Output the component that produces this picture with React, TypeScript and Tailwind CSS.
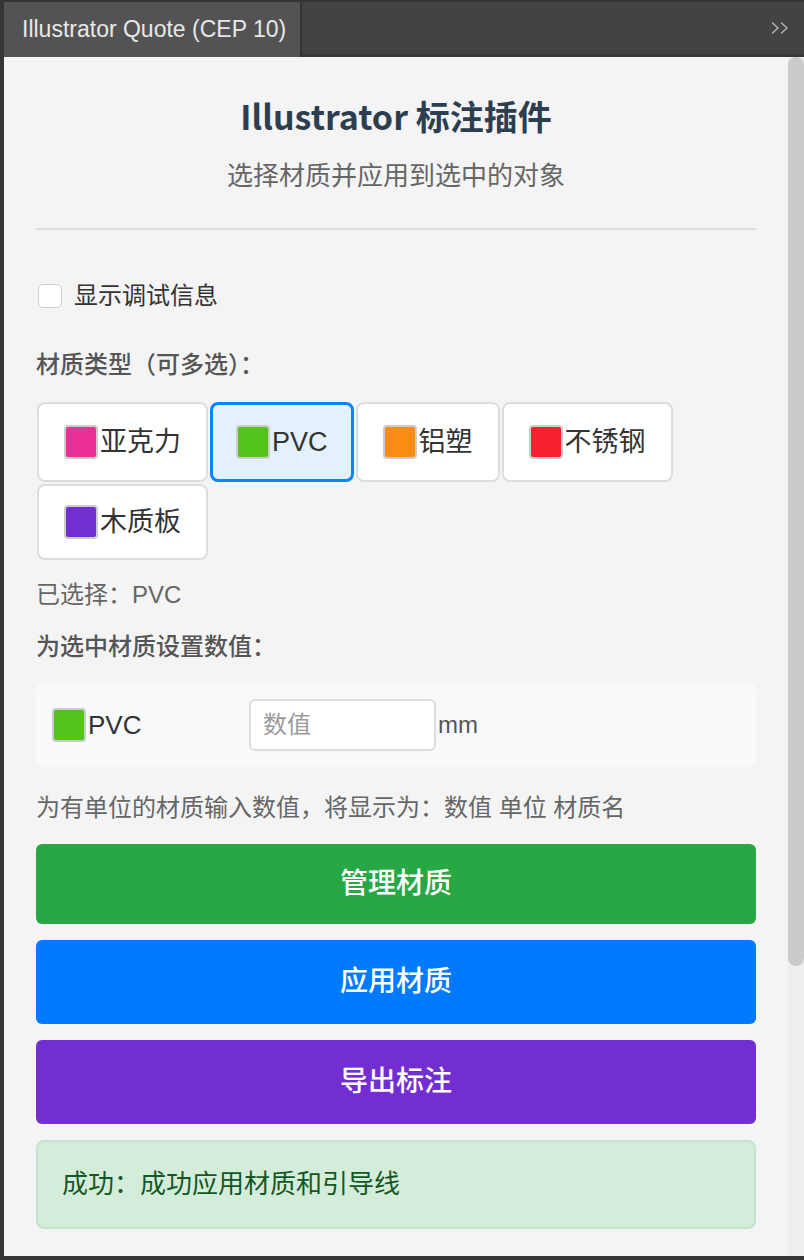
const materials = [
  { name: '亚克力', color: '#eb2f96', selected: false },
  { name: 'PVC', color: '#52c41a', selected: true },
  { name: '铝塑', color: '#fa8c16', selected: false },
  { name: '不锈钢', color: '#f5222d', selected: false },
  { name: '木质板', color: '#722ed1', selected: false },
];

function Swatch({ color }: { color: string }) {
  return (
    <span
      className="block w-[34px] h-[34px] rounded-[4px] border-2 border-[#cccccc] shrink-0"
      style={{ backgroundColor: color }}
    />
  );
}

export default function App() {
  return (
    <div className="w-[804px] h-[1260px] bg-[#353535] flex flex-col overflow-hidden font-['Liberation_Sans','Noto_Sans_CJK_SC',sans-serif]">
      {/* panel tab bar */}
      <div className="h-[57px] flex pt-[2px] shrink-0">
        <div className="ml-[4px] w-[296px] bg-[#535353] flex items-center pl-[18px] text-[23px] text-[#e8e8e8]">
          Illustrator Quote (CEP 10)
        </div>
        <div className="w-[2px] bg-[#353535]" />
        <div className="flex-1 bg-[#434343] border-b-[3px] border-[#383838] flex items-center justify-end pr-[14px]">
          <svg width="20" height="14" viewBox="0 0 20 14" fill="none" stroke="#b8b8b8" strokeWidth="1.3">
            <path d="M2 1.5 L8 7 L2 12.5" />
            <path d="M11 1.5 L17 7 L11 12.5" />
          </svg>
        </div>
      </div>

      {/* panel body */}
      <div className="flex-1 flex ml-[4px] mb-[4px] min-h-0">
        <div className="flex-1 bg-[#f4f4f4] px-[32px] flex flex-col">
          <h1 className="mt-[37px] text-center text-[34px] leading-[44px] font-bold text-[#2c3e50] font-['Noto_Sans_CJK_SC',sans-serif]">
            Illustrator 标注插件
          </h1>
          <p className="mt-[22px] text-center text-[26px] leading-[32px] text-[#666666]">
            选择材质并应用到选中的对象
          </p>
          <div className="mt-[36px] h-[2px] bg-[#dfdfdf]" />

          <label className="mt-[54px] flex items-center h-[24px] gap-[12px] pl-[2px]">
            <span className="block w-[24px] h-[24px] rounded-[5px] border border-[#cfcfcf] bg-white" />
            <span className="text-[24px] leading-[32px] text-[#333333]">显示调试信息</span>
          </label>

          <div className="mt-[41px] text-[24px] leading-[32px] font-medium text-[#555555]">
            材质类型（可多选）：
          </div>

          <div className="mt-[21px] flex flex-wrap gap-[2px] pl-[1px]">
            {materials.map((m) =>
              m.selected ? (
                <div
                  key={m.name}
                  className="flex items-center gap-[2px] rounded-[8px] border-[3px] border-[#0a84ff] bg-[#e4f0fc] px-[23px] py-[19px]"
                >
                  <Swatch color={m.color} />
                  <span className="text-[27px] leading-[36px] text-[#333333]">{m.name}</span>
                </div>
              ) : (
                <div
                  key={m.name}
                  className="flex items-center gap-[2px] rounded-[8px] border-2 border-[#dddddd] bg-white px-[25px] py-[18px]"
                >
                  <Swatch color={m.color} />
                  <span className="text-[27px] leading-[36px] text-[#333333]">{m.name}</span>
                </div>
              )
            )}
          </div>

          <div className="mt-[19px] text-[24px] leading-[32px] text-[#666666]">已选择：PVC</div>

          <div className="mt-[20px] text-[24px] leading-[32px] font-medium text-[#555555]">
            为选中材质设置数值：
          </div>

          <div className="mt-[20px] h-[84px] rounded-[8px] bg-[#f8f9fa] flex items-center pl-[16px]">
            <div className="w-[197px] flex items-center gap-[2px]">
              <Swatch color="#52c41a" />
              <span className="text-[26px] leading-[36px] text-[#333333]">PVC</span>
            </div>
            <div className="w-[187px] h-[52px] rounded-[6px] border-2 border-[#dddddd] bg-white flex items-center pl-[12px] text-[24px] text-[#9a9a9a]">
              数值
            </div>
            <span className="ml-[2px] text-[24px] text-[#555555]">mm</span>
          </div>

          <p className="mt-[25px] text-[24px] leading-[32px] text-[#666666]">
            为有单位的材质输入数值，将显示为：数值 单位 材质名
          </p>

          <div className="mt-[20px] flex flex-col">
            <div className="h-[80px] rounded-[6px] bg-[#28a745] flex items-center justify-center text-[28px] font-medium text-white">
              管理材质
            </div>
            <div className="mt-[16px] h-[84px] rounded-[6px] bg-[#007bff] flex items-center justify-center text-[28px] font-medium text-white">
              应用材质
            </div>
            <div className="mt-[16px] h-[84px] rounded-[6px] bg-[#722ed1] flex items-center justify-center text-[28px] font-medium text-white">
              导出标注
            </div>
          </div>

          <div className="mt-[16px] h-[89px] rounded-[8px] border-2 border-[#c3e6cb] bg-[#d4edda] flex items-center pl-[24px] text-[26px] text-[#155724]">
            成功：成功应用材质和引导线
          </div>
        </div>

        {/* scrollbar */}
        <div className="w-[16px] bg-[#eeeeee] flex flex-col">
          <div className="h-[909px] rounded-full bg-[#cbcbcb]" />
        </div>
      </div>
    </div>
  );
}
